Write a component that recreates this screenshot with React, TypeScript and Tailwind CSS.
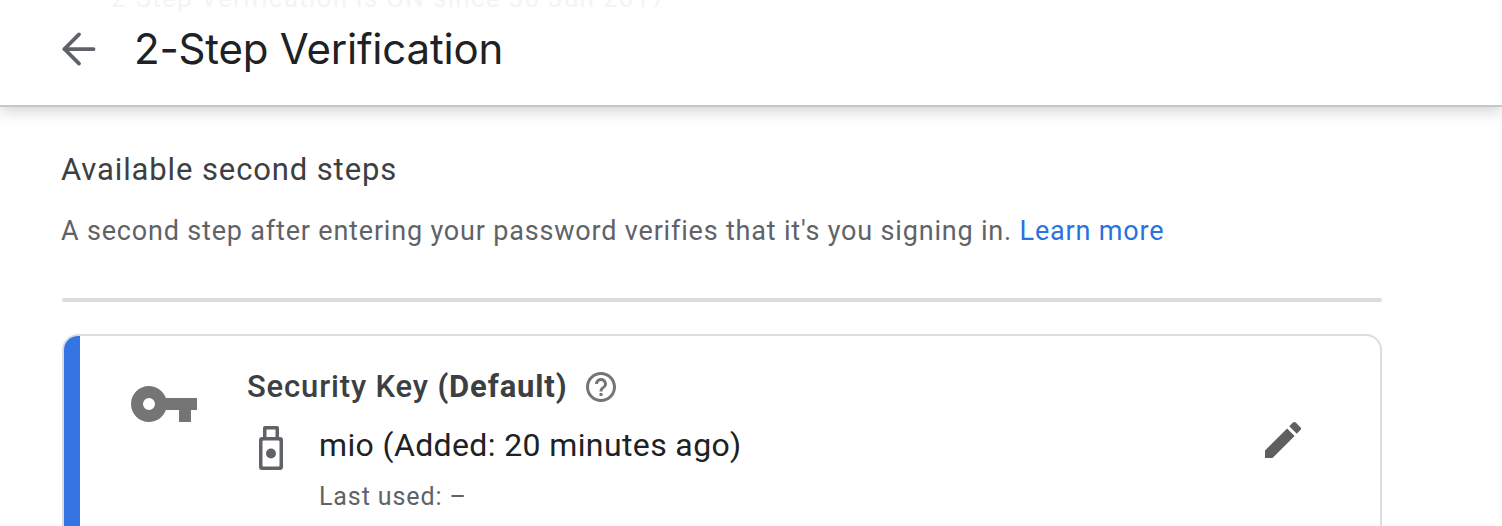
import { ArrowLeft } from 'lucide-react';

function KeyIcon() {
  return (
    <svg width="66" height="36" viewBox="0 0 66 36" className="block">
      <path
        fill="#757575"
        fillRule="evenodd"
        d="M18 0c7.8 0 14.4 5 16.9 12H66v12h-6v12H48V24H34.9C32.4 31 25.8 36 18 36 8 36 0 28 0 18S8 0 18 0Zm0 12a6 6 0 1 0 0 12 6 6 0 0 0 0-12Z"
      />
    </svg>
  );
}

function UsbKeyIcon() {
  return (
    <svg width="24" height="44" viewBox="0 0 24 44" className="block">
      <path
        fill="#5f6368"
        fillRule="evenodd"
        d="M6 0h12a2 2 0 0 1 2 2v9h1a3 3 0 0 1 3 3v27a3 3 0 0 1-3 3H3a3 3 0 0 1-3-3V14a3 3 0 0 1 3-3h1V2a2 2 0 0 1 2-2Zm1.500 3.500v7.500h9V3.500h-9ZM4.500 14.500a1 1 0 0 0-1 1v24a1 1 0 0 0 1 1h15a1 1 0 0 0 1-1v-24a1 1 0 0 0-1-1h-15Zm7.500 8a5 5 0 1 1 0 10 5 5 0 0 1 0-10Z"
      />
    </svg>
  );
}

function HelpIcon() {
  return (
    <svg width="36" height="36" viewBox="0 0 24 24" className="block">
      <path
        fill="#757575"
        d="M11 18h2v-2h-2v2Zm1-16C6.480 2 2 6.480 2 12s4.480 10 10 10 10-4.480 10-10S17.520 2 12 2Zm0 18c-4.410 0-8-3.590-8-8s3.590-8 8-8 8 3.590 8 8-3.590 8-8 8Zm0-14c-2.210 0-4 1.790-4 4h2c0-1.100.9-2 2-2s2 .9 2 2c0 2-3 1.750-3 5h2c0-2.250 3-2.500 3-5 0-2.210-1.790-4-4-4Z"
      />
    </svg>
  );
}

function PencilIcon() {
  return (
    <svg width="48" height="48" viewBox="0 0 24 24" className="block">
      <path
        fill="#5f5f5f"
        d="M3 17.250V21h3.750L17.810 9.940l-3.750-3.750L3 17.250ZM20.710 7.040a1 1 0 0 0 0-1.410l-2.340-2.340a1 1 0 0 0-1.410 0l-1.830 1.830 3.750 3.750 1.830-1.830Z"
      />
    </svg>
  );
}

export default function App() {
  return (
    <div className="h-[526px] w-[1502px] overflow-hidden bg-white font-['Roboto',sans-serif]">
      <header className="relative flex h-[107px] items-center border-b-2 border-[#c6c7cb] bg-white pl-[54px] shadow-[0_4px_14px_rgba(60,64,67,0.24)]">
        <span className="absolute left-[111px] top-[-17px] text-[26px] leading-[30px] tracking-[1.3px] text-[#f4f4f4]">
          2-Step Verification is ON since 30 Jun 2017
        </span>
        <ArrowLeft size={50} strokeWidth={1.8} className="mb-[7px] text-[#5f6368]" />
        <h1 className="mb-[7px] ml-[30px] font-['Inter',sans-serif] text-[42px] font-normal leading-[52px] tracking-[-0.2px] text-[#202124]">
          2-Step Verification
        </h1>
      </header>

      <main className="ml-[62px] w-[1320px] pt-[43px]">
        <h2 className="-ml-px text-[31px] font-normal leading-[40px] tracking-[0.88px] text-[#3c4043]">
          Available second steps
        </h2>
        <p className="-ml-px mt-[22px] text-[27px] leading-[38px] tracking-[0.815px] text-[#5f6368]">
          A second step after entering your password verifies that it's you signing in.{' '}
          <span className="text-[#2a72e0]">Learn more</span>
        </p>
        <div className="mt-[48px] h-1 rounded-sm bg-[#dadce0]" />

        <section className="mt-[32px] flex h-[300px] rounded-t-2xl border-2 border-[#dadce0] bg-white">
          <div className="w-[16px] shrink-0 rounded-tl-[14px] bg-[#3574e3]" />
          <div className="ml-[51px] mt-[50px]">
            <KeyIcon />
          </div>
          <div className="ml-[50px] flex-1 pt-[31px]">
            <div className="flex items-center gap-[16px]">
              <span className="text-[31px] font-medium leading-[40px] tracking-[0.85px] text-[#3c4043]">
                Security Key <span className="font-bold">(Default)</span>
              </span>
              <HelpIcon />
            </div>
            <div className="mt-[16px] flex items-start">
              <div className="ml-[12px] mt-[3px]">
                <UsbKeyIcon />
              </div>
              <span className="ml-[36px] text-[32px] leading-[44px] tracking-[0.38px] text-[#202124]">
                mio (Added: 20 minutes ago)
              </span>
            </div>
            <div className="ml-[72px] mt-[10px] text-[25px] leading-[34px] tracking-[0.9px] text-[#5f6368]">
              Last used: –
            </div>
          </div>
          <div className="mr-[73px] mt-[80px]">
            <PencilIcon />
          </div>
        </section>
      </main>
    </div>
  );
}
